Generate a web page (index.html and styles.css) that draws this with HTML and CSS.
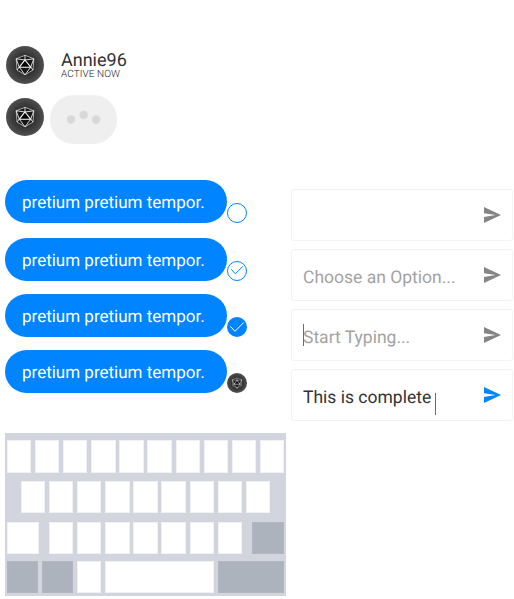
FILE: index.html
```html
<!DOCTYPE html>
<html lang="en">
<head>
<meta charset="utf-8">
<title>Chat components</title>
<link rel="stylesheet" href="styles.css">
</head>
<body>
<svg class="defs" width="0" height="0" aria-hidden="true">
  <defs>
    <radialGradient id="shade"><stop offset="0" stop-color="#181818"/><stop offset=".45" stop-color="#2e2e2e"/><stop offset="1" stop-color="#505050"/></radialGradient>
    <symbol id="avatar" viewBox="0 0 38 38">
      <circle cx="19" cy="19" r="19" fill="url(#shade)"/>
      <path d="M19 9.300 27.800 12.800 27 24 19 28.800 11 24 10.200 12.800Z" fill="#161616" stroke="#bbb" stroke-width=".9"/>
      <path d="M19 14 24.700 21.200H13.300Z" fill="#000" stroke="#fff" stroke-width="1.100"/>
      <path d="M10.200 12.800 19 14 27.800 12.800M19 9.300V14M10.200 12.800 13.300 21.200 11 24M27.800 12.800 24.700 21.200 27 24M13.300 21.200 19 28.800 24.700 21.200" fill="none" stroke="#eee" stroke-width=".9"/>
    </symbol>
    <symbol id="send" viewBox="0 0 17 16"><path d="M0 0 17 8 0 16V10L11.500 8 0 6.200Z" fill="currentColor"/></symbol>
  </defs>
</svg>
<main class="board">
  <header class="person">
    <svg class="avatar"><use href="#avatar"/></svg>
    <div class="who"><div class="name">Annie96</div><div class="active">ACTIVE NOW</div></div>
  </header>
  <div class="typing">
    <svg class="avatar"><use href="#avatar"/></svg>
    <svg class="dots" viewBox="0 0 67 49"><circle cx="21" cy="24.500" r="4.200"/><circle cx="33.700" cy="20" r="4.200"/><circle cx="46.200" cy="24.500" r="4.200"/></svg>
  </div>
  <div class="columns">
    <section class="messages">
      <div class="message first"><p class="bubble">pretium pretium tempor.</p>
        <svg class="status" viewBox="0 0 20 20"><circle cx="10" cy="10" r="9.500" class="ring"/></svg></div>
      <div class="message"><p class="bubble">pretium pretium tempor.</p>
        <svg class="status" viewBox="0 0 20 20"><circle cx="10" cy="10" r="9.500" class="ring"/><path d="M4.300 8.300 8.300 12.800 15.700 5.500" class="ring"/></svg></div>
      <div class="message"><p class="bubble">pretium pretium tempor.</p>
        <svg class="status" viewBox="0 0 20 20"><circle cx="10" cy="10" r="10" class="disc"/><path d="M3.300 9.300 8 14.300 16.700 5.500" class="tick"/></svg></div>
      <div class="message"><p class="bubble">pretium pretium tempor.</p>
        <svg class="status"><use href="#avatar"/></svg></div>
    </section>
    <section class="fields">
      <div class="field"><span></span><svg class="send"><use href="#send"/></svg></div>
      <div class="field"><span>Choose an Option...</span><svg class="send"><use href="#send"/></svg></div>
      <div class="field"><span class="start">Start Typing...</span><svg class="send"><use href="#send"/></svg></div>
      <div class="field ready"><span class="end">This is complete</span><svg class="send"><use href="#send"/></svg></div>
    </section>
  </div>
  <section class="keyboard">
    <div class="keys r1"><b></b><b></b><b></b><b></b><b></b><b></b><b></b><b></b><b></b><b></b></div>
    <div class="keys r2"><b></b><b></b><b></b><b></b><b></b><b></b><b></b><b></b><b></b></div>
    <div class="keys r3"><b></b><b></b><b></b><b></b><b></b><b></b><b></b><b></b><b class="gray"></b></div>
    <div class="keys r4"><b class="gray"></b><b class="gray"></b><b></b><b></b><b class="gray"></b></div>
  </section>
</main>
</body>
</html>
```
FILE: styles.css
```css
* { box-sizing: border-box; }
body { margin: 0; background: #fff; font-family: Roboto, sans-serif; color: #333; overflow: hidden; text-rendering: geometricPrecision; }
.defs { position: absolute; }
.board { width: 514px; height: 599px; padding: 46px 0 0 5px; overflow: hidden; }
.avatar { width: 38px; height: 38px; margin-left: 1px; flex: none; }
.person { display: flex; height: 49px; }
.who { margin: 5px 0 0 17px; }
.name { font-size: 18px; line-height: 19px; }
.active { font-size: 10px; line-height: 10px; color: #222; font-weight: 300; letter-spacing: .07px; }
.typing { display: flex; align-items: flex-start; height: 85px; }
.typing .avatar { margin-top: 3px; }
.dots { width: 67px; height: 49px; margin-left: 6px; border-radius: 24px; background: #efefef; fill: #d8d8d8; }
.columns { display: flex; height: 253px; }
.messages { display: flex; flex-direction: column; gap: 13px; width: 286px; }
.message { display: flex; align-items: flex-end; height: 43px; }
.first { margin-bottom: 2px; }
.bubble { margin: 0; width: 222px; height: 43px; padding: 2px 0 0 17px; border-radius: 21.500px; background: #0084ff; color: #fff; font-size: 17px; line-height: 43px; white-space: nowrap; }
.status { width: 20px; height: 20px; overflow: visible; }
.ring { fill: none; stroke: #0084ff; stroke-width: 1; }
.disc { fill: #0084ff; }
.tick { fill: none; stroke: #fff; stroke-width: 1; }
.fields { display: flex; flex-direction: column; gap: 8px; width: 222px; padding-top: 9px; }
.field { display: flex; justify-content: space-between; height: 52px; padding: 18px 11px 0 11px; border: 1px solid #f3f3f3; border-radius: 3px; color: #a3a3a3; font-size: 17.500px; line-height: 20px; }
.field span { position: relative; white-space: nowrap; }
.send { width: 17px; height: 16px; margin-top: -1px; color: #858585; }
.ready { color: #333; }
.ready .send { color: #0084ff; }
.start::before, .end::after { content: ""; position: absolute; width: 1px; height: 22px; background: #1c7fe0; }
.start::before { left: 0; top: -4px; }
.end::after { right: -5px; top: 5px; }
.keyboard { width: 281px; height: 163px; padding: 7px 2px 0; background: #d2d5dd; }
.keys { display: grid; column-gap: 3.800px; height: 33px; }
.keys b { background: #fff; border: 1px solid #f0f1f4; }
.keys .gray { background: #acb3bd; border-color: #b1b7c1; }
.r1 { grid-template-columns: repeat(10, 24.300px); margin-bottom: 8px; }
.r2 { grid-template-columns: repeat(9, 24.300px); padding-left: 14px; height: 32px; margin-bottom: 9px; }
.r3 { grid-template-columns: 38.300px repeat(7, 24.300px) 38.300px; height: 32px; margin-bottom: 7px; }
.r3 b:first-child { margin-right: 6.300px; }
.r3 b:last-child { margin-left: 6.300px; }
.r4 { grid-template-columns: 31px 31px 24.300px 109px 66px; column-gap: 4px; height: 32px; }
```
